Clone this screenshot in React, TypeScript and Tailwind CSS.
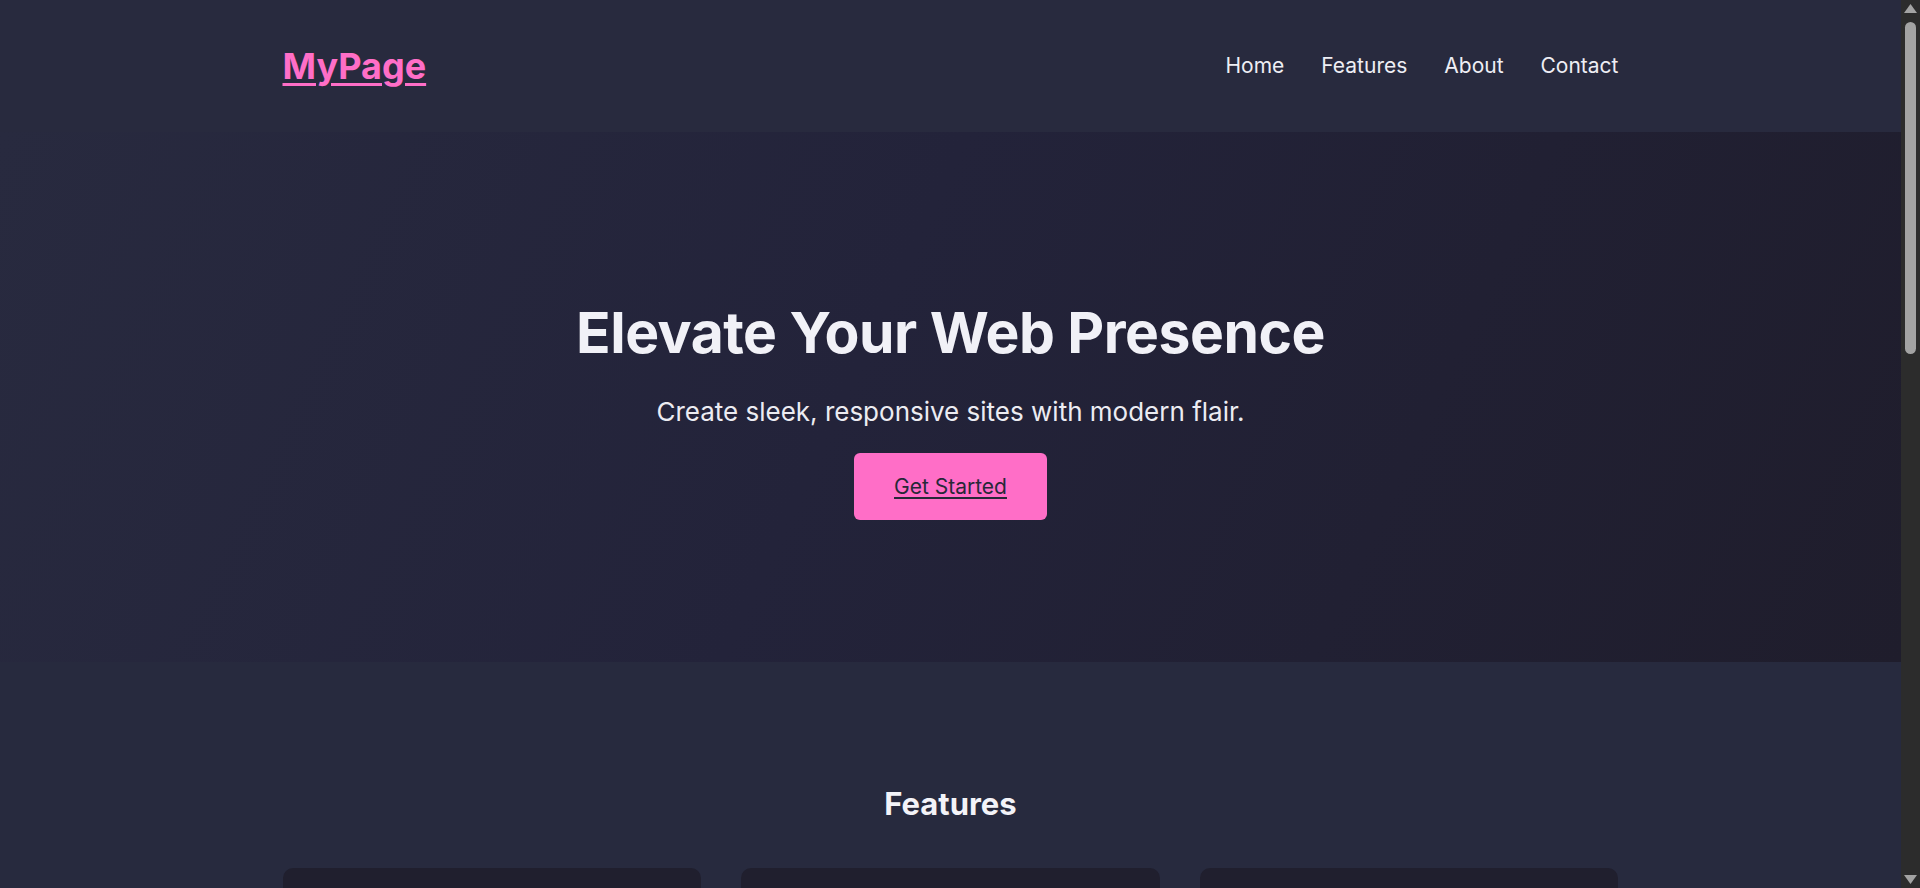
const navLinks = ["Home", "Features", "About", "Contact"];

const features = [
  {
    title: "Responsive Design",
    text: "Layouts that adapt gracefully to phones, tablets and wide desktop screens.",
  },
  {
    title: "Modern Styling",
    text: "Clean typography, soft shadows and a dark palette with a bright accent.",
  },
  {
    title: "Fast Performance",
    text: "Lightweight pages that load quickly and keep visitors engaged.",
  },
];

function Header() {
  return (
    <header className="bg-[#282a3e]">
      <div className="mx-auto flex h-[132px] w-[1336px] items-center justify-between">
        <a href="#" className="text-[36px] font-bold text-[#ff6ec7] underline decoration-[3px] underline-offset-[4px]">
          MyPage
        </a>
        <nav className="flex items-center gap-[37px] text-[21px] text-[#eeeef4]">
          {navLinks.map((link) => (
            <a key={link} href="#">
              {link}
            </a>
          ))}
        </nav>
      </div>
    </header>
  );
}

function Hero() {
  return (
    <section className="flex h-[530px] flex-col items-center bg-[linear-gradient(115deg,#282a3f_0%,#23233a_45%,#1f1d2c_100%)] pt-[167px] text-center">
      <h1 className="text-[57px] leading-[1.2] font-bold tracking-[-0.5px] text-[#f1f1f7]">
        Elevate Your Web Presence
      </h1>
      <p className="mt-[25px] text-[26px] leading-[1.5] text-[#ececf2]">
        Create sleek, responsive sites with modern flair.
      </p>
      <a
        href="#"
        className="mt-[22px] flex h-[67px] w-[193px] items-center justify-center rounded-[6px] bg-[#ff6ec7] text-[21px] text-[#272838] underline underline-offset-[3px]"
      >
        Get Started
      </a>
    </section>
  );
}

function Features() {
  return (
    <section className="pt-[123px] pb-[96px]">
      <div className="mx-auto w-[1336px]">
        <h2 className="text-center text-[31px] leading-[1.2] font-bold text-[#f3f3f8]">Features</h2>
        <div className="mt-[46px] grid grid-cols-3 gap-[40px]">
          {features.map((f) => (
            <div key={f.title} className="h-[250px] rounded-[10px] bg-[#201f2e] px-[32px] pt-[48px]">
              <h3 className="text-[22px] font-semibold text-[#ff6ec7]">{f.title}</h3>
              <p className="mt-4 text-[17px] leading-[1.6] text-[#c9c9d6]">{f.text}</p>
            </div>
          ))}
        </div>
      </div>
    </section>
  );
}

function About() {
  return (
    <section className="bg-[#23233a] py-[110px]">
      <div className="mx-auto w-[1336px] text-center">
        <h2 className="text-[31px] leading-[1.2] font-bold text-[#f3f3f8]">About</h2>
        <p className="mx-auto mt-8 w-[760px] text-[19px] leading-[1.7] text-[#c9c9d6]">
          We craft simple, elegant websites that help individuals and small teams stand out online.
          Every page is built with care, accessibility and speed in mind.
        </p>
        <p className="mx-auto mt-6 w-[760px] text-[19px] leading-[1.7] text-[#c9c9d6]">
          From the first sketch to launch day, we focus on the details that make a site feel
          polished and easy to use.
        </p>
      </div>
    </section>
  );
}

function Contact() {
  return (
    <section className="py-[110px]">
      <div className="mx-auto flex w-[560px] flex-col items-center">
        <h2 className="text-[31px] leading-[1.2] font-bold text-[#f3f3f8]">Contact</h2>
        <form className="mt-10 flex w-full flex-col gap-4">
          <input
            placeholder="Your name"
            className="h-[52px] rounded-[6px] bg-[#201f2e] px-4 text-[17px] text-[#eeeef4] placeholder:text-[#8a8aa0]"
          />
          <input
            placeholder="Your email"
            className="h-[52px] rounded-[6px] bg-[#201f2e] px-4 text-[17px] text-[#eeeef4] placeholder:text-[#8a8aa0]"
          />
          <textarea
            placeholder="Message"
            className="h-[120px] rounded-[6px] bg-[#201f2e] px-4 py-3 text-[17px] text-[#eeeef4] placeholder:text-[#8a8aa0]"
          />
          <button className="mt-2 h-[56px] rounded-[6px] bg-[#ff6ec7] text-[19px] text-[#272838]">Send</button>
        </form>
      </div>
    </section>
  );
}

// the browser's classic scrollbar seen in the screenshot
function Scrollbar() {
  return (
    <aside className="flex h-full w-[19px] shrink-0 flex-col items-center bg-[#2c2c2c]">
      <svg width="13" height="10" viewBox="0 0 13 10" className="mt-[4px]">
        <path d="M6.5 0 L13 9 L0 9 Z" fill="#a3a3a3" />
      </svg>
      <div className="mt-[8px] h-[332px] w-[11px] rounded-full bg-[#a3a3a3]" />
      <div className="flex-1" />
      <svg width="13" height="10" viewBox="0 0 13 10" className="mb-[4px]">
        <path d="M0 1 L13 1 L6.5 10 Z" fill="#a3a3a3" />
      </svg>
    </aside>
  );
}

export default function App() {
  return (
    <div className="flex h-screen overflow-hidden bg-[#272a3e] font-['Inter',sans-serif] text-[#eeeef4]">
      <main className="flex-1 overflow-y-auto [scrollbar-width:none]">
        <Header />
        <Hero />
        <Features />
        <About />
        <Contact />
        <footer className="bg-[#201f2e] py-[40px] text-center text-[16px] text-[#a6a6b8]">
          © 2024 MyPage. All rights reserved.
        </footer>
      </main>
      <Scrollbar />
    </div>
  );
}
